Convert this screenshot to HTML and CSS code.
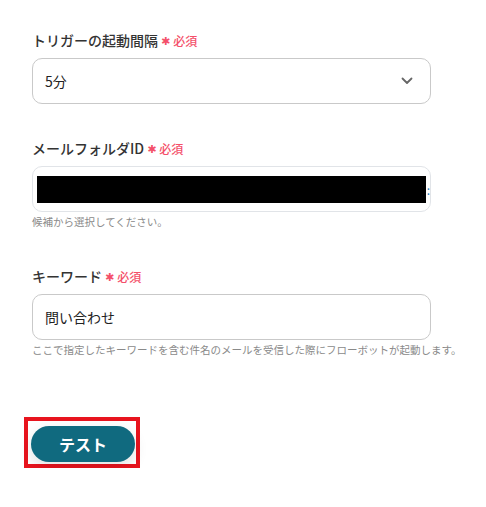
FILE: index.html
```html
<!DOCTYPE html>
<html lang="ja">
<head>
    <meta charset="UTF-8">
    <meta name="viewport" content="width=device-width, initial-scale=1.0">
    <title>トリガー設定</title>
    <link rel="stylesheet" href="styles.css">
</head>
<body>
    <div class="container">
        <!-- 起動間隔 -->
        <div class="field">
            <label class="field-label">トリガーの起動間隔<span class="req-mark">✱</span><span class="req">必須</span></label>
            <div class="box select-box">
                <span class="value">5分</span>
                <svg class="chevron" width="12" height="8" viewBox="0 0 12 8">
                    <path d="M1.5 1.5 L6 6 L10.5 1.5" fill="none" stroke="#666" stroke-width="1.8" stroke-linecap="round" stroke-linejoin="round"/>
                </svg>
            </div>
        </div>

        <!-- メールフォルダID -->
        <div class="field has-help">
            <label class="field-label">メールフォルダID<span class="req-mark">✱</span><span class="req">必須</span></label>
            <div class="box box-light">
                <div class="redacted"></div>
                <span class="peek">:</span>
            </div>
            <p class="help">候補から選択してください。</p>
        </div>

        <!-- キーワード -->
        <div class="field has-help">
            <label class="field-label">キーワード<span class="req-mark">✱</span><span class="req">必須</span></label>
            <div class="box">
                <span class="value">問い合わせ</span>
            </div>
            <p class="help">ここで指定したキーワードを含む件名のメールを受信した際にフローボットが起動します。</p>
        </div>

        <div class="actions">
            <div class="highlight">
                <button type="button" class="test-btn">テスト</button>
            </div>
        </div>
    </div>
</body>
</html>
```

FILE: styles.css
```css
body {
    margin: 0;
    background: #fff;
    font-family: "Noto Sans CJK JP", "Noto Sans", sans-serif;
    color: #333;
}
.container {
    width: 399px;
    padding: 30px 0 0 32px;
}
.field {
    margin-bottom: 34px;
}
.field.has-help {
    margin-bottom: 36px;
}
.field-label {
    display: flex;
    align-items: center;
    height: 20px;
    margin-bottom: 8px;
    font-size: 14px;
    font-weight: 500;
    color: #333;
}
.req-mark {
    color: #f4506a;
    font-family: "DejaVu Sans", sans-serif;
    font-size: 11px;
    margin: 2px 3px 0 3px;
    line-height: 1;
}
.req {
    color: #f4506a;
    font-size: 12px;
    font-weight: 500;
}
.box {
    box-sizing: border-box;
    height: 46px;
    border: 1px solid #c9c9c9;
    border-radius: 10px;
    display: flex;
    align-items: center;
    padding: 0 12px;
    font-size: 14px;
    color: #222;
}
.box-light {
    border-color: #e1e4e8;
    padding: 0 0 0 4px;
}
.select-box {
    justify-content: space-between;
    padding-right: 17px;
}
.redacted {
    width: 390px;
    height: 27px;
    background: #000;
}
.peek {
    color: #2a7ab8;
    font-size: 12px;
    margin-left: 1px;
}
.help {
    margin: 2px 0 0;
    font-size: 10.5px;
    line-height: 16px;
    color: #8a8a8a;
    white-space: nowrap;
}
.actions {
    padding-top: 23px;
    margin-left: -8px;
}
.highlight {
    display: inline-block;
    border: 4px solid #e8141e;
    padding: 5px 1px 2px 3px;
}
.test-btn {
    display: block;
    width: 104px;
    height: 36px;
    border: none;
    border-radius: 18px;
    background: #106a7f;
    color: #fff;
    font-family: inherit;
    font-size: 16px;
    font-weight: 700;
    box-shadow: 0 5px 14px rgba(0,0,0,0.12);
    cursor: pointer;
}
```
